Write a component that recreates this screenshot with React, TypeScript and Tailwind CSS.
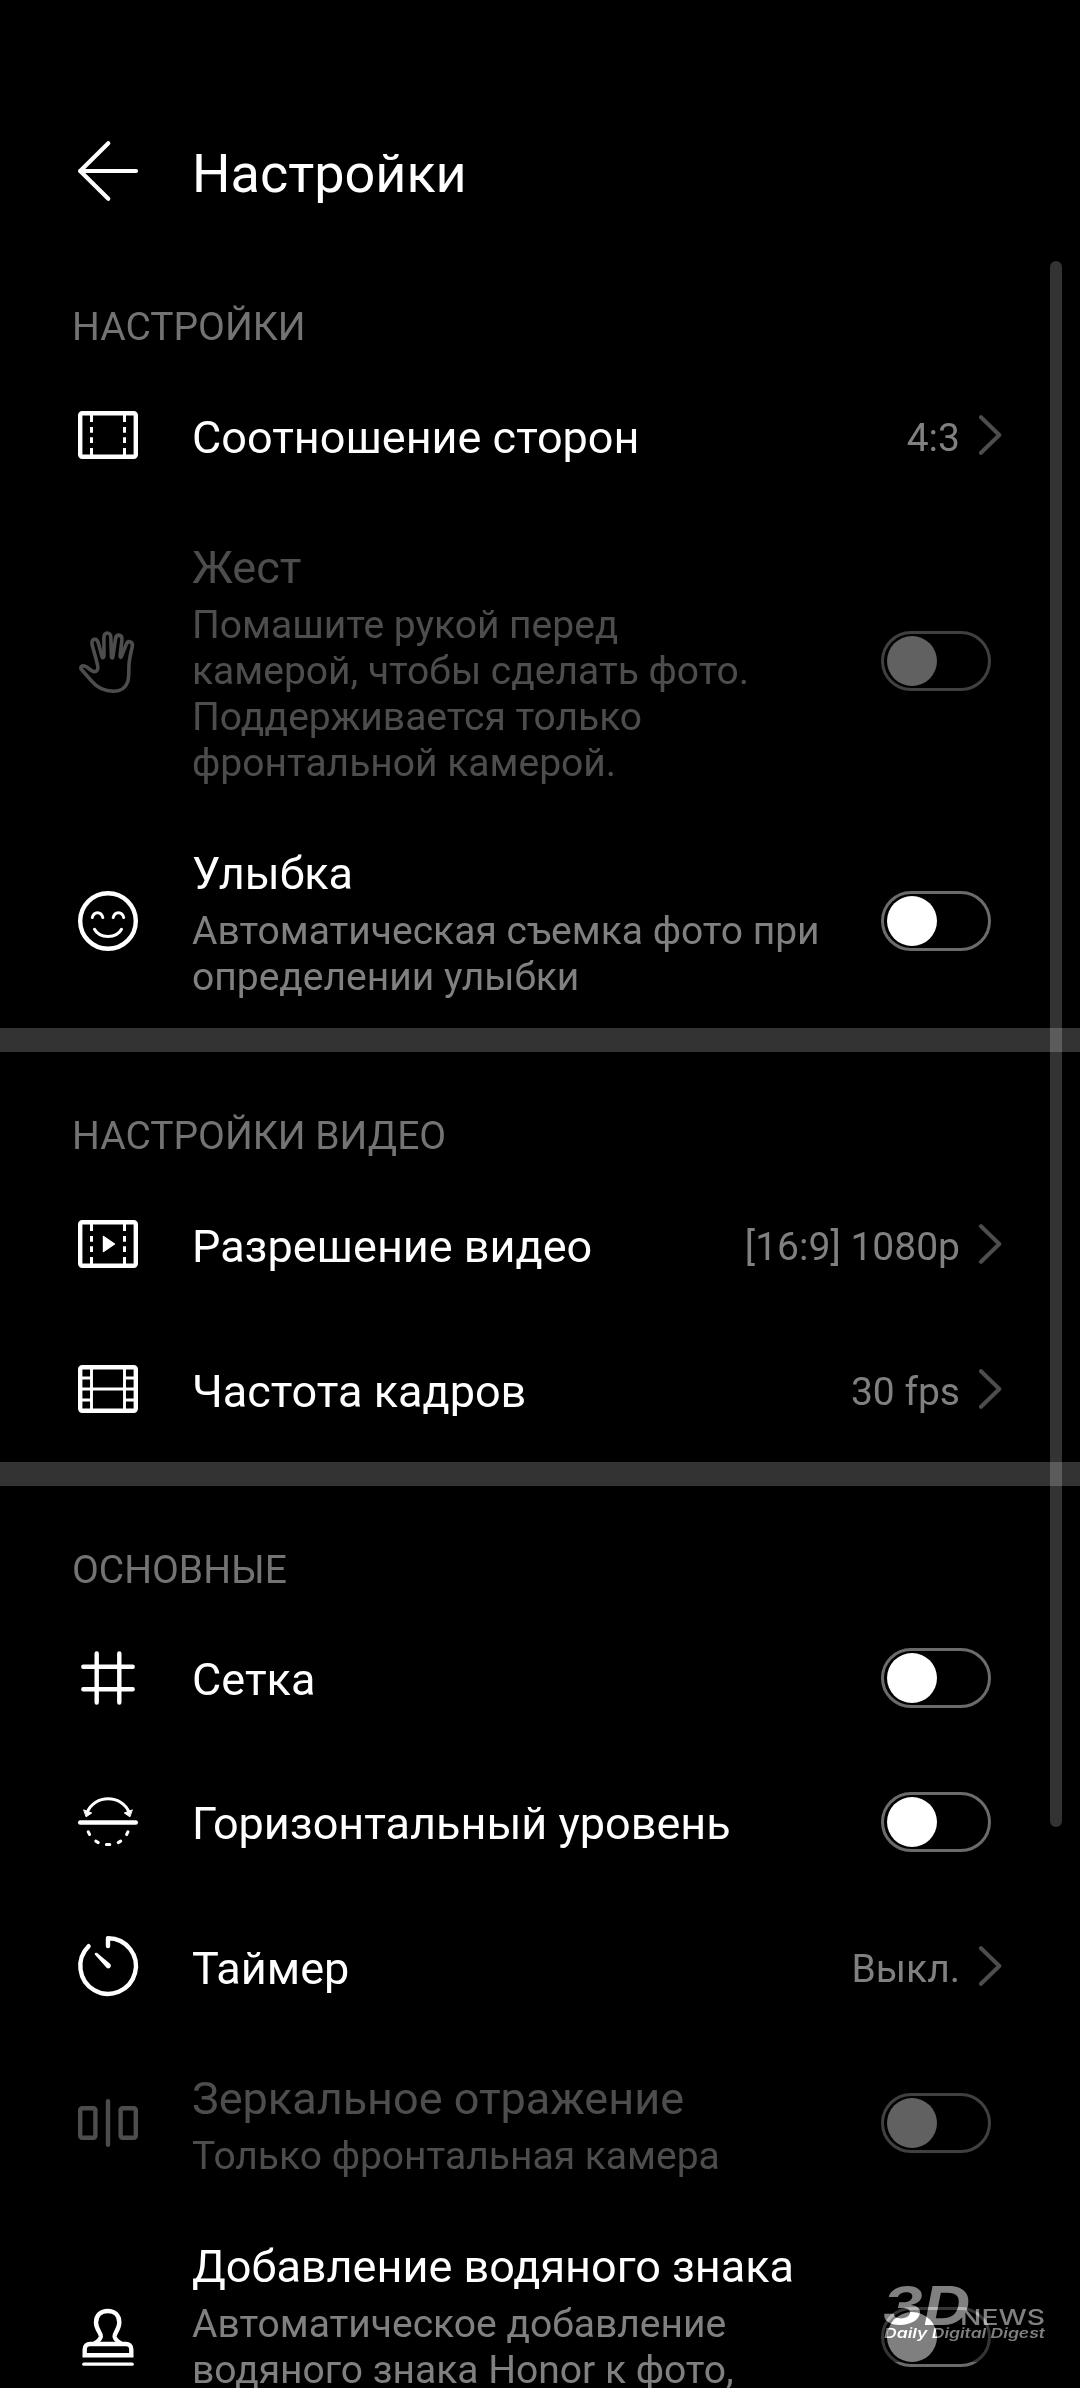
import type { ReactNode } from "react";

function Icon({ children }: { children: ReactNode }) {
  return (
    <svg
      viewBox="0 0 60 60"
      className="size-[60px] shrink-0 overflow-visible"
      fill="none"
      stroke="currentColor"
      strokeWidth={4.4}
      strokeLinecap="round"
      strokeLinejoin="round"
    >
      {children}
    </svg>
  );
}

const BackIcon = () => (
  <Icon>
    <path d="M58 30H2M30.3 2.2L2.2 30l28.1 27.8" strokeWidth={4.2} />
  </Icon>
);

const FrameDashes = () => (
  <path
    d="M13.5 9v8M13.5 22v5.8M13.5 32.3v5.8M13.5 43v8M46.5 9v8M46.5 22v5.8M46.5 32.3v5.8M46.5 43v8"
    strokeWidth={3}
    strokeLinecap="butt"
  />
);

const AspectIcon = () => (
  <Icon>
    <rect x={2.2} y={8.2} width={55.6} height={43.6} rx={2} />
    <FrameDashes />
  </Icon>
);

const VideoIcon = () => (
  <Icon>
    <rect x={2.2} y={8.2} width={55.6} height={43.6} rx={2} />
    <FrameDashes />
    <path d="M25.5 22.5v15l11-7.5z" fill="currentColor" strokeWidth={1.4} />
  </Icon>
);

const FilmIcon = () => (
  <Icon>
    <rect x={2.2} y={8.2} width={55.6} height={43.6} rx={2} />
    <path
      d="M13.5 9v42M46.5 9v42M3 30h54M3 19h10M3 41h10M47 19h10M47 41h10"
      strokeWidth={2.9}
      strokeLinecap="butt"
    />
  </Icon>
);

const HandIcon = () => (
  <Icon>
    <path
      strokeWidth={3.6}
      d="M3.5 38.5C1.5 36.5 4 34 7 35.2C10 36.5 12.5 39.5 15.5 40.5C18.5 41.3 20.4 39 19.8 35.5C18.7 29 16 21 14.2 14C12.6 7.2 18.6 6.4 20.3 12L24 25.5C24.4 27.2 26 27 26 25L25.9 6.5C26 .5 32.5 .5 32.8 6L33.4 25.5C33.5 27.3 34.7 27.3 34.9 25.6L37.4 8.4C38.2 2.2 44.4 3 43.9 9L42.1 24.8C42 26.7 43 26.8 43.6 25.2L48 13.8C50.2 8.4 55.5 10.8 54.2 16C52.6 22.5 51.2 28.5 50.9 35C50.7 42.5 51.2 47 49.4 51.5C47.4 57 43 60 36 60.2C25.5 60.4 19 56.5 13.7 50.2Z"
    />
  </Icon>
);

const SmileIcon = () => (
  <Icon>
    <circle cx={30} cy={30} r={27.8} />
    <path
      strokeWidth={3}
      d="M14.3 26.5C15.8 20 23.3 20 24.8 26.5M35.2 26.5C36.7 20 44.2 20 45.7 26.5M16.5 38.3C21.5 47.8 38.5 47.8 43.5 38.3"
    />
  </Icon>
);

const GridIcon = () => (
  <Icon>
    <path d="M18.7 5.5v49M41.3 5.5v49M5.3 18.7h49.4M5.3 41.2h49.4" />
  </Icon>
);

const LevelIcon = () => (
  <Icon>
    <path d="M2.2 30.5h55.6" />
    <path d="M9 20.8C16.5 2.1 43.8 2.1 51.3 20.8" strokeWidth={3} />
    <path
      d="M6 18L13.7 21L8.4 24.6zM54 18L46.3 21L51.6 24.6z"
      fill="currentColor"
      strokeWidth={1}
    />
    <path
      d="M10.2 39.8l1.4 2.7M17.8 49.1l2.5 1.5M28.4 52.4h3.4M40.2 50.6l2.5-1.5M48.6 42.5l1.4-2.7"
      strokeWidth={3}
    />
  </Icon>
);

const TimerIcon = () => (
  <Icon>
    <path d="M30 10V2.2A27.8 27.8 0 1 1 10.6 10.2" />
    <path
      d="M17 18.8C16.2 17 17.6 16 19.2 17.1L32 27.8C34.4 30.2 31.2 34 28.6 31.8z"
      fill="currentColor"
      stroke="none"
    />
  </Icon>
);

const MirrorIcon = () => (
  <Icon>
    <rect x={2.2} y={15.2} width={15.2} height={29.6} rx={2} />
    <rect x={42.6} y={15.2} width={15.2} height={29.6} rx={2} />
    <path d="M30 8.2v43.6" />
  </Icon>
);

const StampIcon = () => (
  <Icon>
    <path d="M16.5 36.5C19.5 34.5 22.2 33 22.8 29.5C23.2 26 18 22.5 18 15.5C18 8 23 4 29.7 4S41.3 8 41.3 15.5C41.3 22.5 36.2 26 36.6 29.5C37.2 33 39.9 34.5 43 36.5" />
    <path
      d="M6.7 48.3V42.5C6.7 39 9 37 12 37H48C51 37 53.3 39 53.3 42.5V48.3Z"
      strokeLinejoin="miter"
    />
    <path d="M5.8 57.2h48.4" strokeWidth={3.2} />
  </Icon>
);

function Toggle({ disabled }: { disabled?: boolean }) {
  return (
    <div
      className={`flex h-[60px] w-[110px] items-center rounded-full border-[3px] pl-[3px] ${
        disabled ? "border-[#404040]" : "border-[#6b6b6b]"
      }`}
    >
      <div className={`size-[50px] rounded-full ${disabled ? "bg-[#616161]" : "bg-white"}`} />
    </div>
  );
}

function Value({ children }: { children: ReactNode }) {
  return (
    <div className="-mr-[11px] flex items-center gap-[19px]">
      <span className="mt-1.5 text-[39px] leading-[46px] text-[#808080]">{children}</span>
      <svg
        viewBox="0 0 23 40"
        className="h-10 w-[23px]"
        fill="none"
        stroke="#4d4d4d"
        strokeWidth={4}
        strokeLinecap="round"
        strokeLinejoin="round"
      >
        <path d="M2 2.2L20.3 20L2 37.8" />
      </svg>
    </div>
  );
}

type RowProps = {
  icon: ReactNode;
  title: string;
  lines?: string[];
  disabled?: boolean;
  height: string;
  textClass?: string;
  children: ReactNode;
};

function Row({ icon, title, lines, disabled, height, textClass = "mt-[5px]", children }: RowProps) {
  return (
    <div
      className={`flex items-center pr-[89px] pl-[78px] ${height} ${
        disabled ? "text-[#4d4d4d]" : "text-white"
      }`}
    >
      {icon}
      <div className={`ml-[54px] flex-1 whitespace-nowrap ${textClass}`}>
        <div className="text-[45px] leading-[53px]">{title}</div>
        {lines && (
          <div
            className={`mt-2 text-[39px] leading-[46px] ${disabled ? "text-[#4d4d4d]" : "text-[#808080]"}`}
          >
            {lines.map((l) => (
              <div key={l}>{l}</div>
            ))}
          </div>
        )}
      </div>
      {children}
    </div>
  );
}

function SectionTitle({ children }: { children: ReactNode }) {
  return (
    <h2 className="h-[120px] pt-[61px] pl-[72px] text-[39px] leading-[46px] text-[#737373]">
      {children}
    </h2>
  );
}

const Divider = () => <div className="h-6 bg-[#333333]" />;

function Watermark() {
  return (
    <>
      <div className="absolute top-[2285px] left-[881px] h-[77px] w-[166px] bg-black/50" />
      <svg
        viewBox="0 0 166 58"
        className="absolute top-[2285px] left-[881px] h-[58px] w-[166px] mix-blend-plus-lighter"
        fill="#808080"
      >
        <text
          x={1}
          y={39.8}
          fontFamily="Inter, sans-serif"
          fontSize={53}
          fontStyle="italic"
          fontWeight={700}
          textLength={88}
          lengthAdjust="spacingAndGlyphs"
        >
          3D
        </text>
        <text
          x={79}
          y={39.8}
          fontFamily="Inter, sans-serif"
          fontSize={21.5}
          fontWeight={500}
          textLength={85}
          lengthAdjust="spacingAndGlyphs"
        >
          NEWS
        </text>
        <text
          x={3}
          y={52.6}
          fontFamily="Inter, sans-serif"
          fontSize={13.4}
          fontStyle="italic"
          fontWeight={600}
          textLength={161}
          lengthAdjust="spacingAndGlyphs"
        >
          Daily Digital Digest
        </text>
      </svg>
    </>
  );
}

export default function App() {
  return (
    <div className="relative h-[2388px] w-[1080px] overflow-hidden bg-black font-[Roboto,sans-serif]">
      <header className="flex h-[243px] items-start gap-[54px] pt-[141px] pl-[78px] text-white">
        <BackIcon />
        <h1 className="mt-px text-[54px] leading-[64px]">Настройки</h1>
      </header>

      <section className="h-[785px]">
        <SectionTitle>НАСТРОЙКИ</SectionTitle>
        <Row icon={<AspectIcon />} title="Соотношение сторон" height="h-[144px]">
          <Value>4:3</Value>
        </Row>
        <Row
          icon={<HandIcon />}
          title="Жест"
          lines={[
            "Помашите рукой перед",
            "камерой, чтобы сделать фото.",
            "Поддерживается только",
            "фронтальной камерой.",
          ]}
          disabled
          height="h-[308px]"
        >
          <Toggle disabled />
        </Row>
        <Row
          icon={<SmileIcon />}
          title="Улыбка"
          lines={["Автоматическая съемка фото при", "определении улыбки"]}
          height="h-[212px]"
        >
          <Toggle />
        </Row>
      </section>
      <Divider />

      <section>
        <SectionTitle>НАСТРОЙКИ ВИДЕО</SectionTitle>
        <Row icon={<VideoIcon />} title="Разрешение видео" height="h-[144px]">
          <Value>[16:9] 1080p</Value>
        </Row>
        <Row icon={<FilmIcon />} title="Частота кадров" height="h-[146px]">
          <Value>30 fps</Value>
        </Row>
      </section>
      <Divider />

      <section>
        <SectionTitle>ОСНОВНЫЕ</SectionTitle>
        <Row icon={<GridIcon />} title="Сетка" height="h-[144px]" textClass="mt-[3px]">
          <Toggle />
        </Row>
        <Row
          icon={<LevelIcon />}
          title="Горизонтальный уровень"
          height="h-[144px]"
          textClass="mt-[3px]"
        >
          <Toggle />
        </Row>
        <Row icon={<TimerIcon />} title="Таймер" height="h-[144px]">
          <Value>Выкл.</Value>
        </Row>
        <Row
          icon={<MirrorIcon />}
          title="Зеркальное отражение"
          lines={["Только фронтальная камера"]}
          disabled
          height="h-[170px]"
        >
          <Toggle disabled />
        </Row>
        <Row
          icon={<StampIcon />}
          title="Добавление водяного знака"
          lines={["Автоматическое добавление", "водяного знака Honor к фото,"]}
          height="h-[258px]"
          textClass="mt-[5px] pb-[46px]"
        >
          <Toggle />
        </Row>
      </section>

      <div className="absolute top-[261px] left-[1050px] h-[1566px] w-3 rounded-full bg-white/20" />
      <Watermark />
    </div>
  );
}
